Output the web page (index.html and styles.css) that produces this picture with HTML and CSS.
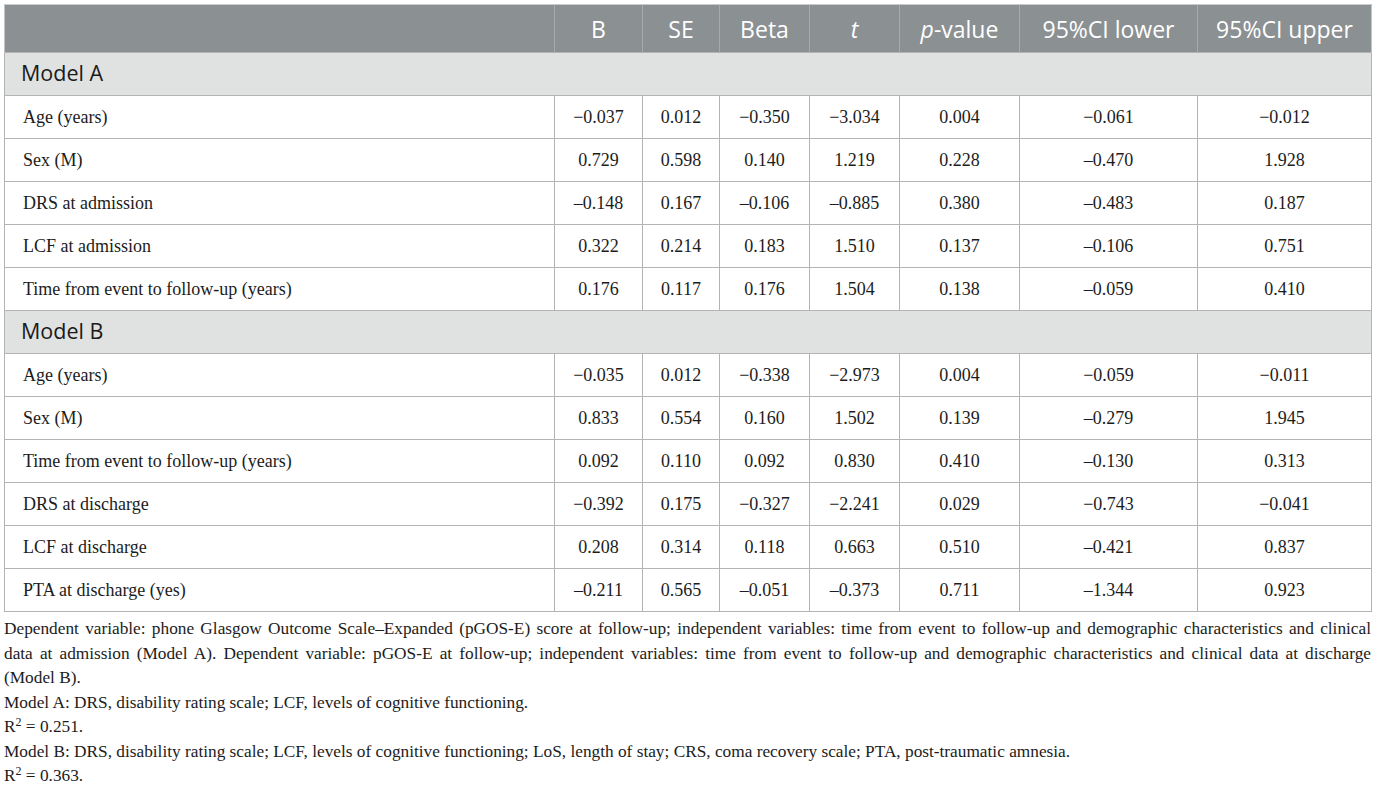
FILE: index.html
```html
<!DOCTYPE html>
<html lang="en">
<head>
<meta charset="utf-8">
<title>Regression table</title>
<link rel="stylesheet" href="styles.css">
</head>
<body>
<div class="page">
  <table class="results">
    <colgroup>
      <col class="c-label">
      <col class="c-b">
      <col class="c-se">
      <col class="c-beta">
      <col class="c-t">
      <col class="c-p">
      <col class="c-lo">
      <col class="c-hi">
    </colgroup>
    <thead>
      <tr class="head">
        <th></th>
        <th>B</th>
        <th>SE</th>
        <th>Beta</th>
        <th><i>t</i></th>
        <th><i>p</i>-value</th>
        <th>95%CI lower</th>
        <th>95%CI upper</th>
      </tr>
    </thead>
    <tbody>
      <tr class="group"><td colspan="8">Model A</td></tr>
      <tr><td>Age (years)</td><td>−0.037</td><td>0.012</td><td>−0.350</td><td>−3.034</td><td>0.004</td><td>−0.061</td><td>−0.012</td></tr>
      <tr><td>Sex (M)</td><td>0.729</td><td>0.598</td><td>0.140</td><td>1.219</td><td>0.228</td><td>–0.470</td><td>1.928</td></tr>
      <tr><td>DRS at admission</td><td>–0.148</td><td>0.167</td><td>–0.106</td><td>–0.885</td><td>0.380</td><td>–0.483</td><td>0.187</td></tr>
      <tr><td>LCF at admission</td><td>0.322</td><td>0.214</td><td>0.183</td><td>1.510</td><td>0.137</td><td>–0.106</td><td>0.751</td></tr>
      <tr><td>Time from event to follow-up (years)</td><td>0.176</td><td>0.117</td><td>0.176</td><td>1.504</td><td>0.138</td><td>–0.059</td><td>0.410</td></tr>
      <tr class="group"><td colspan="8">Model B</td></tr>
      <tr><td>Age (years)</td><td>−0.035</td><td>0.012</td><td>−0.338</td><td>−2.973</td><td>0.004</td><td>−0.059</td><td>−0.011</td></tr>
      <tr><td>Sex (M)</td><td>0.833</td><td>0.554</td><td>0.160</td><td>1.502</td><td>0.139</td><td>–0.279</td><td>1.945</td></tr>
      <tr><td>Time from event to follow-up (years)</td><td>0.092</td><td>0.110</td><td>0.092</td><td>0.830</td><td>0.410</td><td>–0.130</td><td>0.313</td></tr>
      <tr><td>DRS at discharge</td><td>−0.392</td><td>0.175</td><td>−0.327</td><td>−2.241</td><td>0.029</td><td>−0.743</td><td>−0.041</td></tr>
      <tr><td>LCF at discharge</td><td>0.208</td><td>0.314</td><td>0.118</td><td>0.663</td><td>0.510</td><td>–0.421</td><td>0.837</td></tr>
      <tr><td>PTA at discharge (yes)</td><td>–0.211</td><td>0.565</td><td>–0.051</td><td>–0.373</td><td>0.711</td><td>–1.344</td><td>0.923</td></tr>
    </tbody>
  </table>
  <div class="notes">
    <p><span class="jline">Dependent variable: phone Glasgow Outcome Scale–Expanded (pGOS-E) score at follow-up; independent variables: time from event to follow-up and demographic characteristics and clinical</span> <span class="jline">data at admission (Model A). Dependent variable: pGOS-E at follow-up; independent variables: time from event to follow-up and demographic characteristics and clinical data at discharge</span> <span class="line">(Model B).</span></p>
    <p>Model A: DRS, disability rating scale; LCF, levels of cognitive functioning.</p>
    <p>R<sup>2</sup> = 0.251.</p>
    <p>Model B: DRS, disability rating scale; LCF, levels of cognitive functioning; LoS, length of stay; CRS, coma recovery scale; PTA, post-traumatic amnesia.</p>
    <p>R<sup>2</sup> = 0.363.</p>
  </div>
</div>
</body>
</html>
```
FILE: styles.css
```css
html, body {
  margin: 0;
  padding: 0;
  background: #ffffff;
}

.page {
  padding: 4px 4px 0 4px;
  width: 1367px;
}

.results {
  width: 1367px;
  table-layout: fixed;
  border-collapse: collapse;
  font-family: "Liberation Serif", "Times New Roman", serif;
  font-size: 18px;
  color: #1c1c1c;
}

.c-label { width: 550px; }
.c-b { width: 88px; }
.c-se { width: 77px; }
.c-beta { width: 90px; }
.c-t { width: 90px; }
.c-p { width: 120px; }
.c-lo { width: 178px; }
.c-hi { width: 174px; }

.head th {
  height: 46px;
  padding: 0;
  background: #8b9093;
  color: #ffffff;
  font-family: "Open Sans", "Liberation Sans", sans-serif;
  font-weight: 400;
  font-size: 23px;
  text-align: center;
  vertical-align: middle;
  border-top: 1px solid #c9cbcc;
  border-left: 1px solid #a6aaac;
  padding-top: 1px;
}

.head th:first-child {
  border-left: 1px solid #c2c4c5;
}

.head th:last-child {
  border-right: 1px solid #c2c4c5;
}

.head th i {
  font-style: italic;
}

.results td {
  height: 42px;
  padding: 0;
  text-align: center;
  vertical-align: middle;
  border: 1px solid #b4b4b4;
}

.results td:first-child {
  text-align: left;
  padding-left: 18px;
}

.group td {
  background: #e0e2e1;
  font-family: "Open Sans", "Liberation Sans", sans-serif;
  font-size: 21.5px;
  color: #1a1a1a;
}

.results tr.group td:first-child {
  height: 38px;
  padding-left: 16px;
  padding-bottom: 4px;
}

.notes {
  margin-top: 5px;
  font-family: "Liberation Serif", "Times New Roman", serif;
  font-size: 17.3px;
  line-height: 24.5px;
  color: #1c1c1c;
}

.notes p {
  margin: 0;
}

.notes .jline {
  display: block;
  text-align: justify;
  text-align-last: justify;
}

.notes .line {
  display: block;
}

.notes sup {
  font-size: 12px;
  line-height: 0;
  vertical-align: 6px;
}
```
